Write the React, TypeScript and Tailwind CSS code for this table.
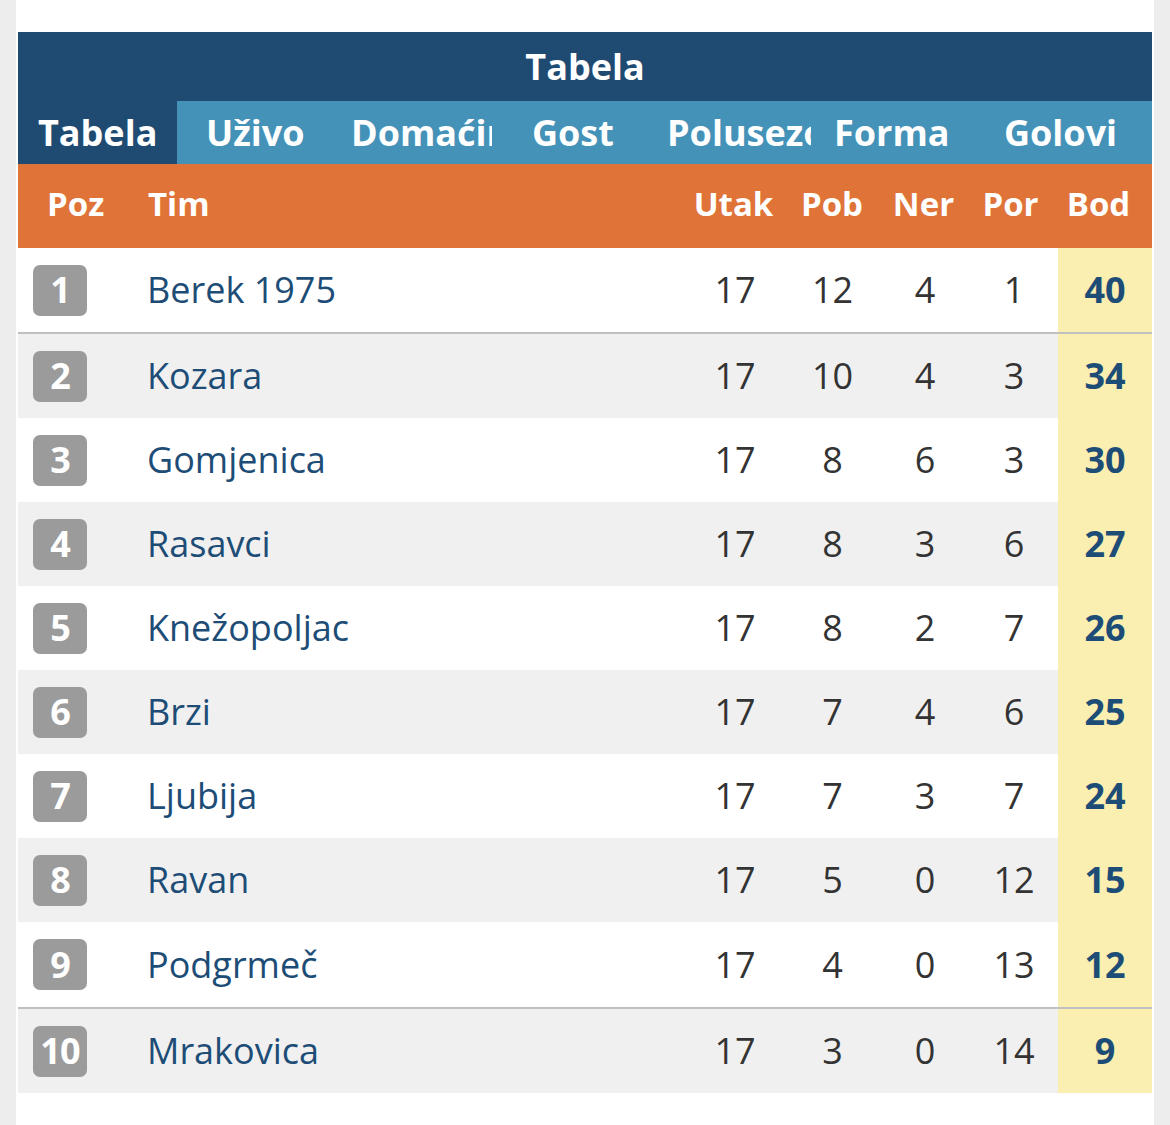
import React from "react";

type Row = { pos: number; team: string; u: number; p: number; n: number; l: number; b: number };

const rows: Row[] = [
  { pos: 1, team: "Berek 1975", u: 17, p: 12, n: 4, l: 1, b: 40 },
  { pos: 2, team: "Kozara", u: 17, p: 10, n: 4, l: 3, b: 34 },
  { pos: 3, team: "Gomjenica", u: 17, p: 8, n: 6, l: 3, b: 30 },
  { pos: 4, team: "Rasavci", u: 17, p: 8, n: 3, l: 6, b: 27 },
  { pos: 5, team: "Knežopoljac", u: 17, p: 8, n: 2, l: 7, b: 26 },
  { pos: 6, team: "Brzi", u: 17, p: 7, n: 4, l: 6, b: 25 },
  { pos: 7, team: "Ljubija", u: 17, p: 7, n: 3, l: 7, b: 24 },
  { pos: 8, team: "Ravan", u: 17, p: 5, n: 0, l: 12, b: 15 },
  { pos: 9, team: "Podgrmeč", u: 17, p: 4, n: 0, l: 13, b: 12 },
  { pos: 10, team: "Mrakovica", u: 17, p: 3, n: 0, l: 14, b: 9 },
];

function Divider() {
  return <div className="h-[2px] bg-[#c0c0c0]" />;
}

function DataRow({ r, shaded, tall }: { r: Row; shaded: boolean; tall?: boolean }) {
  return (
    <div className={`flex ${tall ? "h-[85px]" : "h-[84px]"} items-stretch ${shaded ? "bg-[#f0f0f0]" : "bg-white"}`}>
      <div className="flex w-[130px] items-center pl-[15px]">
        <div className="flex h-[51px] w-[54px] items-center justify-center rounded-[7px] bg-[#9b9b9b] text-[36px] font-bold leading-none tracking-tight text-white">
          {r.pos}
        </div>
      </div>
      <div className="flex flex-1 items-center text-[36px] text-[#1d4d76]">
        <span className="-ml-[1px]">{r.team}</span>
      </div>
      <div className="flex w-[100px] items-center justify-center text-[36px] text-[#333333]">{r.u}</div>
      <div className="flex w-[95px] items-center justify-center text-[36px] text-[#333333]">{r.p}</div>
      <div className="flex w-[90px] items-center justify-center text-[36px] text-[#333333]">{r.n}</div>
      <div className="flex w-[88px] items-center justify-center text-[36px] text-[#333333]">{r.l}</div>
      <div className="flex w-[94px] items-center justify-center bg-[#faeeb0] text-[36px] font-bold text-[#1d4d76]">
        {r.b}
      </div>
    </div>
  );
}

const tabs: { label: string; w: string; pl: string; clip?: string; active?: boolean }[] = [
  { label: "Tabela", w: "w-[159px]", pl: "pl-[20px]", active: true },
  { label: "Uživo", w: "w-[158px]", pl: "pl-[29px]" },
  { label: "Domaćin", w: "w-[178px]", pl: "pl-[16px]", clip: "max-w-[141px]" },
  { label: "Gost", w: "w-[137px]", pl: "pl-[19px]" },
  { label: "Polusezona", w: "w-[175px]", pl: "pl-[17px]", clip: "max-w-[144px]" },
  { label: "Forma", w: "w-[150px]", pl: "pl-[9px]" },
  { label: "Golovi", w: "w-[177px]", pl: "pl-[29px]" },
];

export default function App() {
  return (
    <div className="flex min-h-[1125px] w-[1170px] bg-white font-['Open_Sans','Noto_Sans',sans-serif]">
      <div className="w-[16px] shrink-0 bg-[#ededed]" />
      <div className="flex-1 px-[2px] pt-[32px]">
        <div className="flex h-[69px] items-center justify-center bg-[#1f4b73] text-[36px] font-bold text-white">
          Tabela
        </div>
        <div className="flex h-[63px] bg-[#4592b9]">
          {tabs.map((t) => (
            <div
              key={t.label}
              className={`flex shrink-0 items-center overflow-hidden ${t.w} ${t.pl} ${t.active ? "bg-[#1f4b73]" : ""} text-[36px] font-bold text-white`}
            >
              <span className={`inline-block overflow-hidden whitespace-nowrap ${t.clip ?? ""}`}>{t.label}</span>
            </div>
          ))}
        </div>
        <div className="flex h-[84px] items-center bg-[#e07338] pb-[5px] text-[33px] font-bold text-white">
          <div className="w-[130px] pl-[29px]">Poz</div>
          <div className="flex-1">Tim</div>
          <div className="w-[100px] pr-[3px] text-center">Utak</div>
          <div className="w-[95px] pr-[1px] text-center">Pob</div>
          <div className="w-[90px] pr-[3px] text-center">Ner</div>
          <div className="w-[88px] pr-[7px] text-center">Por</div>
          <div className="w-[94px] pr-[13px] text-center">Bod</div>
        </div>
        <DataRow r={rows[0]} shaded={false} />
        <Divider />
        {rows.slice(1, 9).map((r, i) => (
          <DataRow key={r.pos} r={r} shaded={i % 2 === 0} tall={i === 7} />
        ))}
        <Divider />
        <DataRow r={rows[9]} shaded={true} />
      </div>
      <div className="w-[16px] shrink-0 bg-[#ededed]" />
    </div>
  );
}
